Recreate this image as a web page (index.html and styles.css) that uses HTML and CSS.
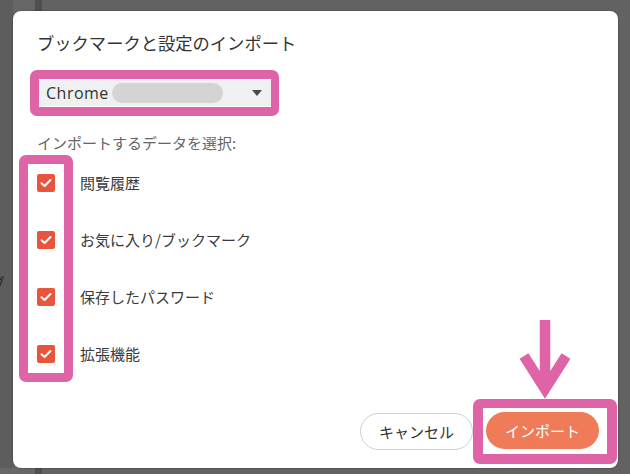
FILE: index.html
```html
<!DOCTYPE html>
<html lang="ja">
<head>
  <meta charset="UTF-8">
  <meta name="viewport" content="width=device-width, initial-scale=1.0">
  <title>ブックマークと設定のインポート</title>
  <link rel="stylesheet" href="styles.css">
</head>
<body>

  <div class="backdrop">
    <aside class="side">
      <span class="side-text">ブ</span>
    </aside>

    <div class="dialog">
      <h1>ブックマークと設定のインポート</h1>

      <div class="mark-box select-mark">
        <div class="select">
          <span class="browser">Chrome</span>
          <span class="blur"></span>
          <span class="caret"></span>
        </div>
      </div>

      <p class="hint">インポートするデータを選択:</p>

      <div class="options">
        <label class="option"><span class="check"><svg viewBox="0 0 18 18" width="18" height="18"><polyline points="4.5,9.2 7.6,12 13.5,6" /></svg></span>閲覧履歴</label>
        <label class="option"><span class="check"><svg viewBox="0 0 18 18" width="18" height="18"><polyline points="4.5,9.2 7.6,12 13.5,6" /></svg></span>お気に入り/ブックマーク</label>
        <label class="option"><span class="check"><svg viewBox="0 0 18 18" width="18" height="18"><polyline points="4.5,9.2 7.6,12 13.5,6" /></svg></span>保存したパスワード</label>
        <label class="option"><span class="check"><svg viewBox="0 0 18 18" width="18" height="18"><polyline points="4.5,9.2 7.6,12 13.5,6" /></svg></span>拡張機能</label>
        <!-- annotation over the checkbox column -->
        <div class="mark-col"></div>
      </div>

      <div class="actions">
        <button class="btn cancel">キャンセル</button>
        <div class="mark-box import-mark">
          <svg class="arrow" viewBox="0 0 50 79" width="50" height="79">
            <line x1="25" y1="0" x2="25" y2="70" />
            <polyline points="4,36 25,69 46,36" />
          </svg>
          <button class="btn import">インポート</button>
        </div>
      </div>
    </div>
  </div>

</body>
</html>
```

FILE: styles.css
```css
/* Reset styling */
* {
  margin: 0;
  padding: 0;
  box-sizing: border-box;
}

body {
  font-family: "Noto Sans CJK JP", sans-serif;
  background: #5f5f5f;
  width: 630px;
  height: 474px;
  overflow: hidden;
}

.backdrop {
  display: flex;
  height: 474px;
  padding: 11px 12px 6px 0;
  background: linear-gradient(90deg, #676767 0, #676767 35px, #4f4f4f 35px, #4f4f4f 42px, #626262 42px);
}

.side {
  width: 13px;
  overflow: hidden;
  background: #5d5d5d;
  margin-top: -11px;
  padding-top: 273px;
}

.side-text {
  display: block;
  margin-left: -10px;
  font-size: 15px;
  line-height: 20px;
  color: #2a2a2a;
}

.dialog {
  flex: 1;
  background: #fff;
  border-radius: 8px;
  box-shadow: 0 0 2px rgba(0, 0, 0, 0.4);
  padding: 20px 1px 4px 24px;
  display: flex;
  flex-direction: column;
}

h1 {
  font-size: 17.3px;
  font-weight: normal;
  line-height: 24px;
  color: #333;
  margin-bottom: 15px;
}

/* Pink annotation frames */
.mark-box {
  border: 9px solid #de63a7;
  border-radius: 7px;
}

.select-mark {
  align-self: flex-start;
  margin-left: -7px;
  width: 249px;
  padding: 1px 0;
  border-right-width: 8px;
}

.select {
  display: flex;
  align-items: center;
  height: 26px;
  background: #eff0f2;
  padding: 0 9px 0 7px;
}

.browser {
  font-family: "Open Sans", sans-serif;
  font-size: 16px;
  color: #333;
  letter-spacing: 0.5px;
}

.blur {
  width: 111px;
  height: 20px;
  margin-left: 3px;
  border-radius: 10px;
  background: #d4d4d4;
}

.caret {
  margin-left: auto;
  border-left: 5px solid transparent;
  border-right: 5px solid transparent;
  border-top: 6px solid #4a4a4a;
}

.hint {
  margin-top: 16px;
  font-size: 15px;
  line-height: 22px;
  color: #666;
}

.options {
  position: relative;
  display: flex;
  flex-direction: column;
}

.option {
  display: flex;
  align-items: center;
  gap: 25px;
  height: 57px;
  font-size: 15px;
  color: #3a3a3a;
}

.check {
  width: 18px;
  height: 18px;
  border-radius: 2px;
  background: #e8553c;
  display: flex;
}

.check polyline {
  fill: none;
  stroke: #fff;
  stroke-width: 2;
  stroke-linecap: round;
  stroke-linejoin: round;
}

.mark-col {
  position: absolute;
  left: -18px;
  top: 1px;
  width: 54px;
  height: 227px;
  border: 9px solid #de63a7;
  border-radius: 7px;
}

.actions {
  margin-top: 17px;
  display: flex;
  justify-content: flex-end;
  align-items: center;
}

.btn {
  font-family: "Noto Sans CJK JP", sans-serif;
  font-size: 15px;
  width: 113px;
  height: 37px;
  border-radius: 19px;
  cursor: pointer;
}

.cancel {
  background: #fff;
  border: 1px solid #cfcfcf;
  color: #333;
}

.import-mark {
  position: relative;
  border-width: 9px 10px 10px 10px;
  padding: 4px 8px 5px 3px;
}

.import {
  background: #ef7b58;
  border: none;
  color: #fff;
}

.arrow {
  position: absolute;
  left: 50%;
  margin-left: -25px;
  bottom: calc(100% + 9px);
  overflow: visible;
}

.arrow line,
.arrow polyline {
  fill: none;
  stroke: #de63a7;
  stroke-width: 10.5;
}
```
